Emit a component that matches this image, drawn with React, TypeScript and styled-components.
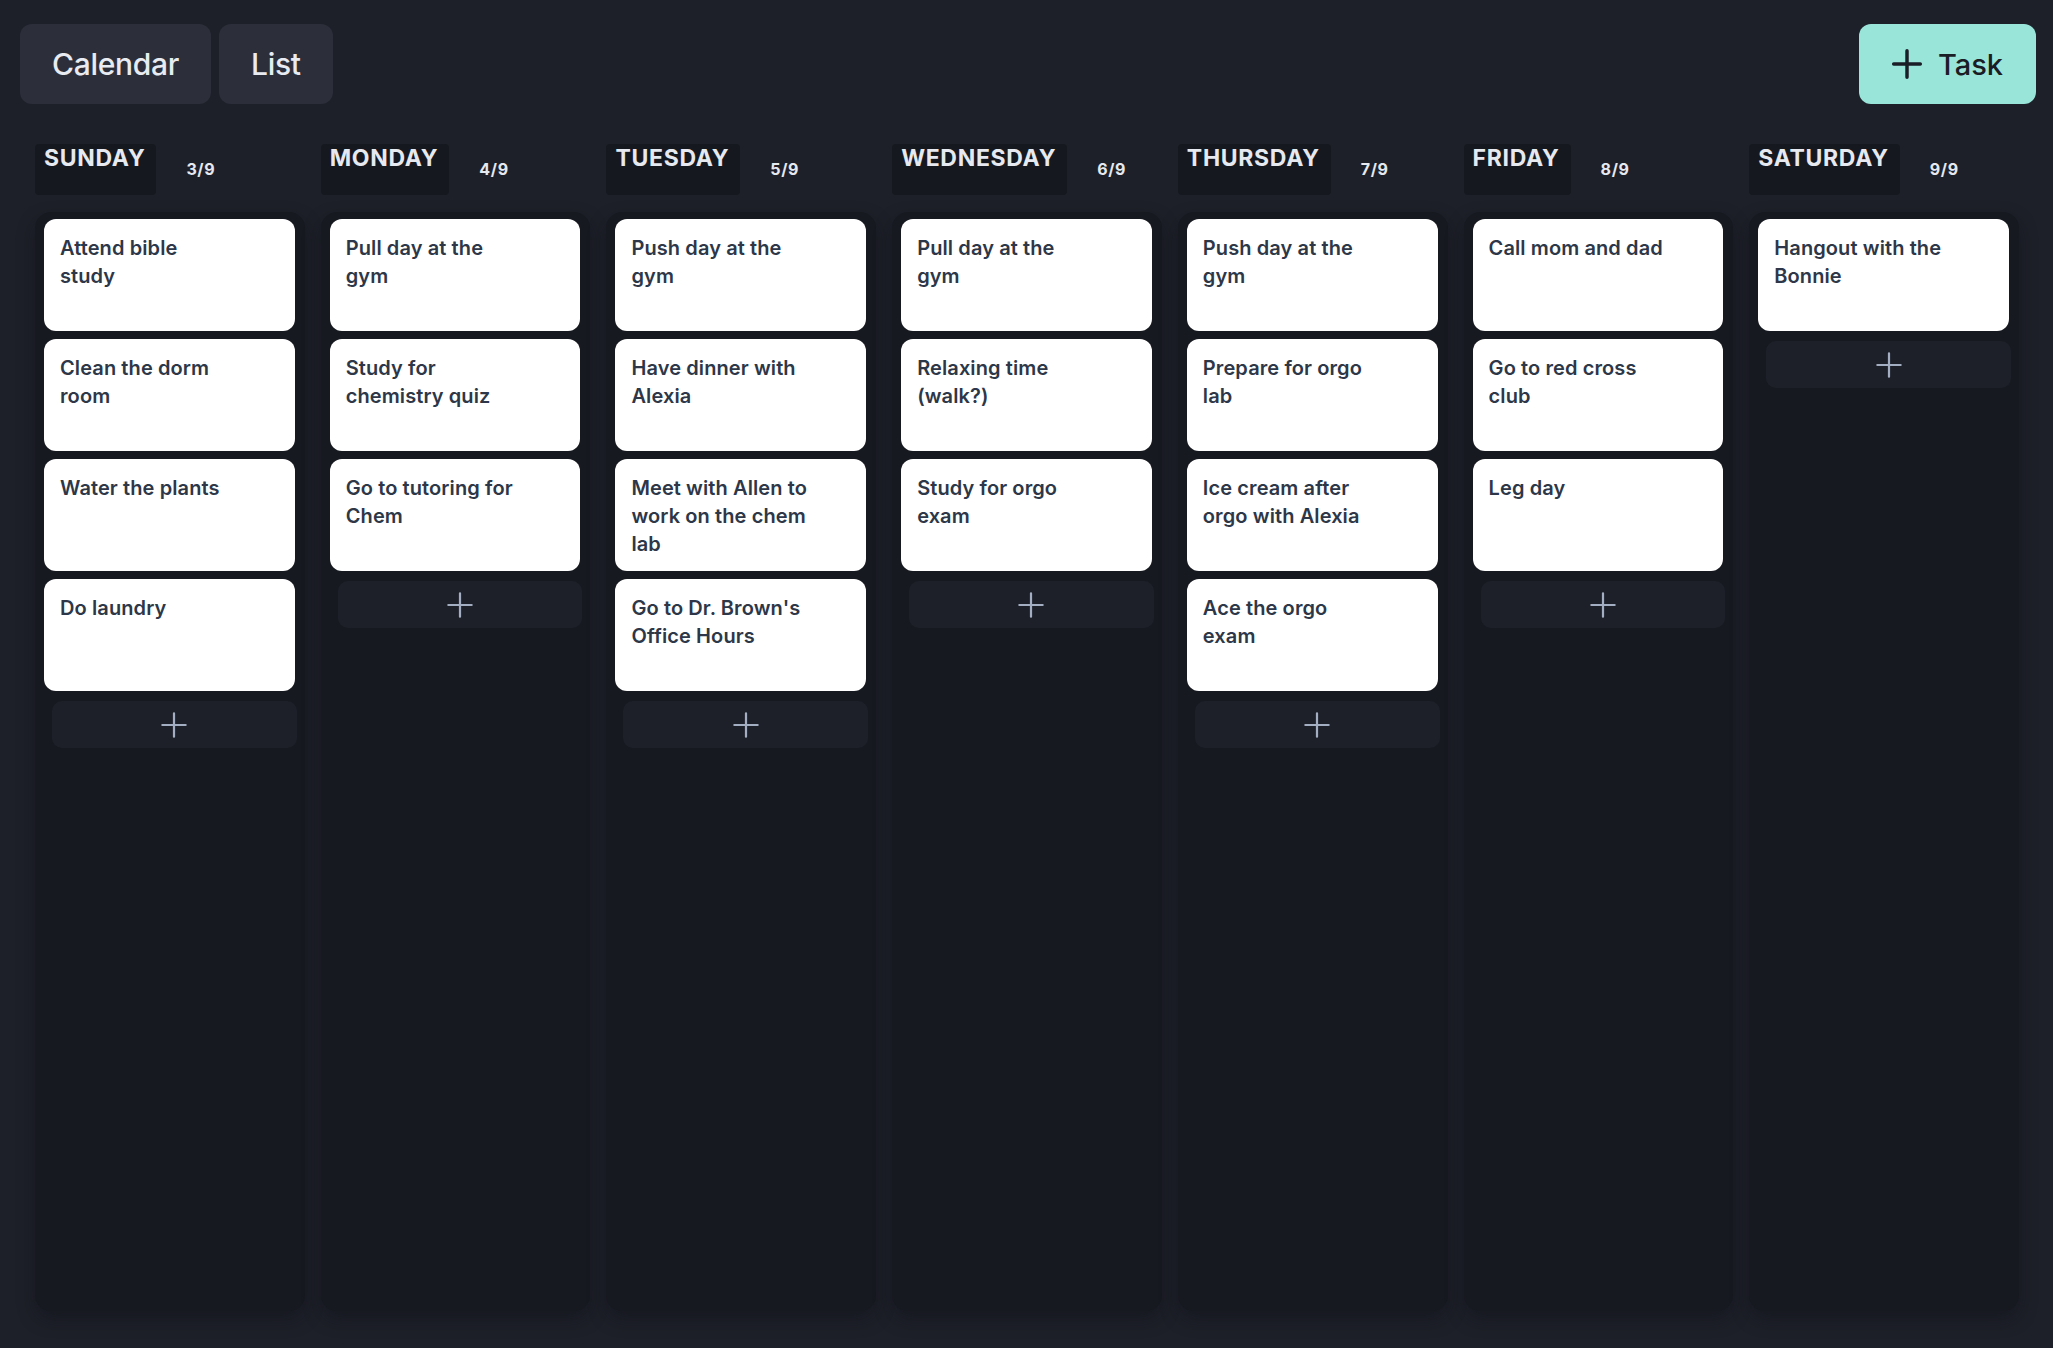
import React from "react";
import styled, { createGlobalStyle } from "styled-components";

const GlobalStyle = createGlobalStyle`
  html, body {
    margin: 0;
    padding: 0;
    background: #1e2029;
    font-family: Inter, "Noto Sans", "Liberation Sans", sans-serif;
  }
  #root {
    min-height: 100vh;
  }
  * { box-sizing: border-box; }
`;

const Page = styled.div`
  display: flex;
  flex-direction: column;
  height: 100vh;
  padding: 24px 0 37px 0;
`;

const TopBar = styled.div`
  display: flex;
  justify-content: space-between;
  align-items: center;
  padding: 0 17px 0 20px;
  height: 80px;
`;

const ViewTabs = styled.div`
  display: flex;
  gap: 8px;
`;

const TabButton = styled.button`
  height: 80px;
  padding: 0 32px;
  border: none;
  border-radius: 12px;
  background: #2c2f3a;
  color: #e8ebf1;
  font-family: Inter, sans-serif;
  font-size: 30px;
  font-weight: 500;
  letter-spacing: -0.01em;
  cursor: pointer;
`;

const AddTaskButton = styled.button`
  display: flex;
  align-items: center;
  gap: 15px;
  height: 80px;
  padding: 0 33px 0 32px;
  border: none;
  border-radius: 12px;
  background: #9ae5d9;
  color: #1a1d26;
  font-family: Inter, sans-serif;
  font-size: 29px;
  font-weight: 500;
  cursor: pointer;
`;

const Board = styled.div`
  flex: 1;
  display: grid;
  grid-template-columns: repeat(7, 1fr);
  gap: 16px;
  padding: 0 34px 0 35px;
  margin-top: 40px;
  min-height: 0;
`;

const DayColumn = styled.div`
  display: flex;
  flex-direction: column;
  min-height: 0;
`;

const DayHeader = styled.div`
  display: flex;
  align-items: flex-start;
  height: 51px;
  margin-bottom: 17px;
`;

const DayName = styled.div`
  height: 51px;
  padding: 1px 11px 0 9px;
  background: #16181f;
  border-radius: 4px;
  color: #e6e9f0;
  font-size: 23px;
  line-height: 27px;
  font-weight: 700;
  letter-spacing: 0.03em;
`;

const DayDate = styled.div`
  margin: 15px 0 0 30px;
  color: #e6e9f0;
  font-size: 16px;
  line-height: 20px;
  font-weight: 700;
  letter-spacing: 0.04em;
`;

const TaskList = styled.div`
  flex: 1;
  display: flex;
  flex-direction: column;
  gap: 8px;
  padding: 7px 10px 7px 9px;
  background: #171920;
  border-radius: 16px;
  box-shadow: 0 8px 18px rgba(10, 12, 18, 0.35);
`;

const TaskCard = styled.div`
  height: 112px;
  flex-shrink: 0;
  padding: 15px 16px;
  background: #ffffff;
  border-radius: 12px;
  color: #2d3748;
  font-size: 20px;
  line-height: 28px;
  font-weight: 600;
  letter-spacing: 0.005em;
  white-space: pre-line;
`;

const AddCardButton = styled.button`
  display: flex;
  align-items: center;
  justify-content: center;
  height: 47px;
  flex-shrink: 0;
  margin: 2px -2px 0 8px;
  border: none;
  border-radius: 10px;
  background: #1e2029;
  cursor: pointer;
`;

const PlusIcon = ({ size, stroke, color }: { size: number; stroke: number; color: string }) => (
  <svg width={size} height={size} viewBox="0 0 24 24" fill="none">
    <path d="M12 2v20M2 12h20" stroke={color} strokeWidth={stroke} strokeLinecap="round" />
  </svg>
);

const days = [
  {
    name: "SUNDAY",
    date: "3/9",
    tasks: ["Attend bible\nstudy", "Clean the dorm\nroom", "Water the plants", "Do laundry"],
  },
  {
    name: "MONDAY",
    date: "4/9",
    tasks: ["Pull day at the\ngym", "Study for\nchemistry quiz", "Go to tutoring for\nChem"],
  },
  {
    name: "TUESDAY",
    date: "5/9",
    tasks: [
      "Push day at the\ngym",
      "Have dinner with\nAlexia",
      "Meet with Allen to\nwork on the chem\nlab",
      "Go to Dr. Brown's\nOffice Hours",
    ],
  },
  {
    name: "WEDNESDAY",
    date: "6/9",
    tasks: ["Pull day at the\ngym", "Relaxing time\n(walk?)", "Study for orgo\nexam"],
  },
  {
    name: "THURSDAY",
    date: "7/9",
    tasks: ["Push day at the\ngym", "Prepare for orgo\nlab", "Ice cream after\norgo with Alexia", "Ace the orgo\nexam"],
  },
  {
    name: "FRIDAY",
    date: "8/9",
    tasks: ["Call mom and dad", "Go to red cross\nclub", "Leg day"],
  },
  {
    name: "SATURDAY",
    date: "9/9",
    tasks: ["Hangout with the\nBonnie"],
  },
];

const App = () => {
  return (
    <>
      <GlobalStyle />
      <Page>
        <TopBar>
          <ViewTabs>
            <TabButton>Calendar</TabButton>
            <TabButton>List</TabButton>
          </ViewTabs>
          <AddTaskButton>
            <PlusIcon size={32} stroke={2.6} color="#1a1d26" />
            Task
          </AddTaskButton>
        </TopBar>
        <Board>
          {days.map((day) => (
            <DayColumn key={day.name}>
              <DayHeader>
                <DayName>{day.name}</DayName>
                <DayDate>{day.date}</DayDate>
              </DayHeader>
              <TaskList>
                {day.tasks.map((t, i) => (
                  <TaskCard key={i}>{t}</TaskCard>
                ))}
                <AddCardButton>
                  <PlusIcon size={28} stroke={1.9} color="#a3aec2" />
                </AddCardButton>
              </TaskList>
            </DayColumn>
          ))}
        </Board>
      </Page>
    </>
  );
};

export default App;
